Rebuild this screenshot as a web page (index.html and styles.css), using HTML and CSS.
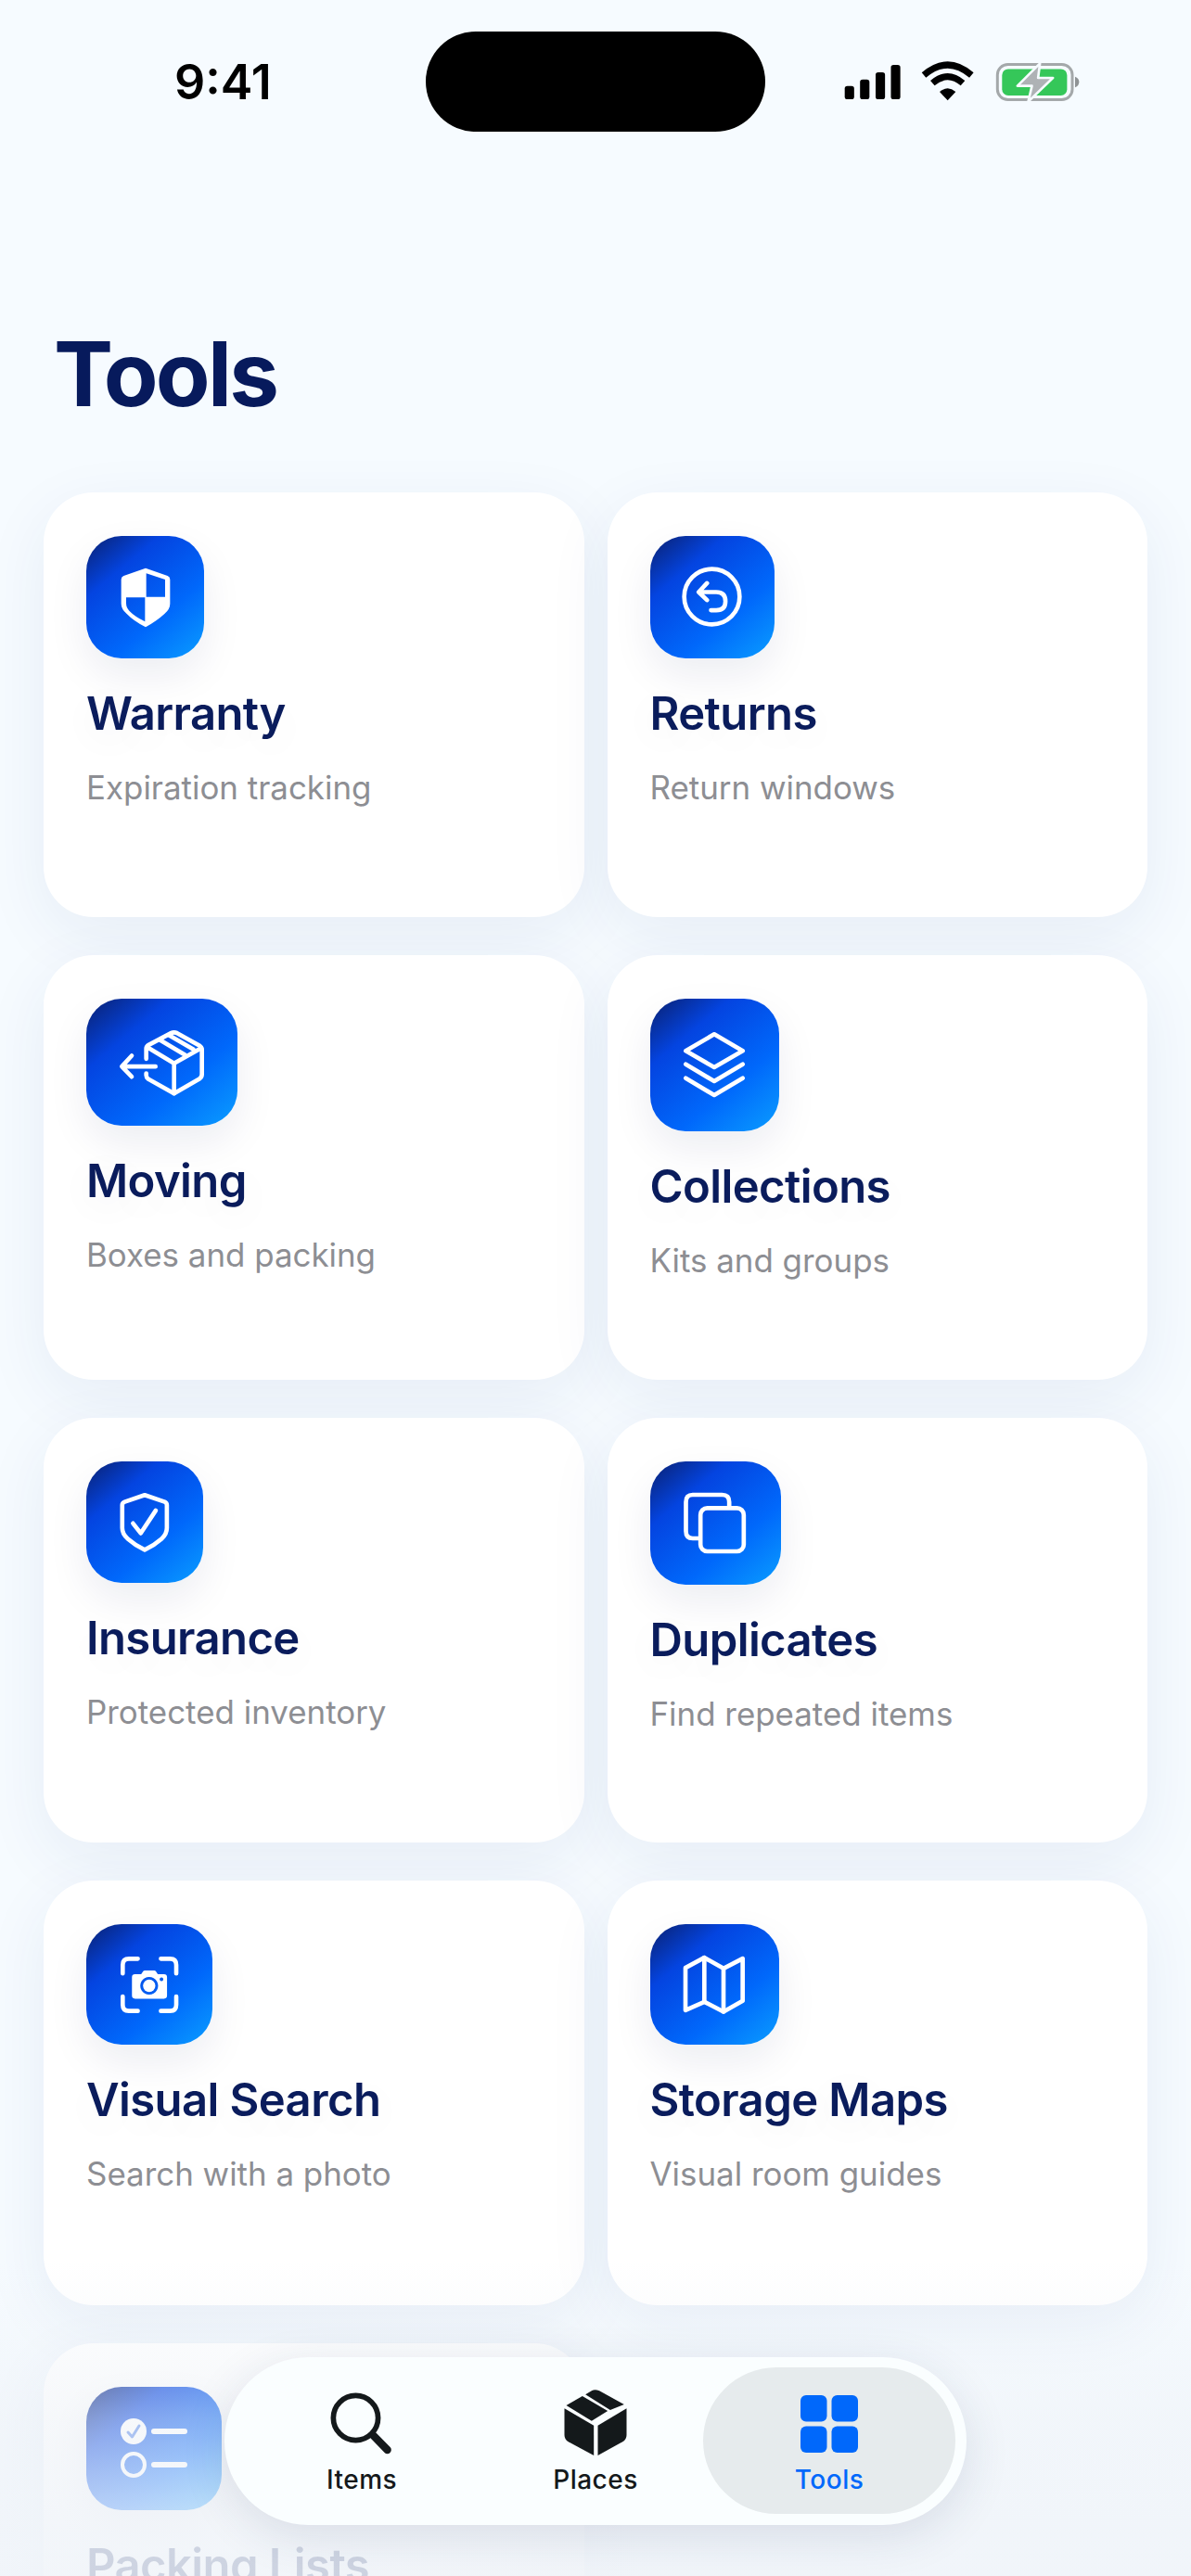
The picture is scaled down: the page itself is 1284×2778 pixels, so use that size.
FILE: index.html
```html
<!DOCTYPE html>
<html lang="en">
<head>
    <meta charset="UTF-8">
    <meta name="viewport" content="width=device-width, initial-scale=1.0">
    <title>Tools</title>
    <link rel="stylesheet" href="styles.css">
</head>
<body>
    <div class="screen">
        <!-- Status bar -->
        <div class="status-bar">
            <div class="time">9:41</div>
            <div class="island"></div>
            <div class="status-icons">
                <svg width="63" height="39" viewBox="90 52 198 123"><rect x="95" y="127" width="32" height="45" rx="9"/><rect x="147" y="105" width="32" height="67" rx="9"/><rect x="200" y="80" width="32" height="92" rx="9"/><rect x="252" y="55" width="32" height="117" rx="9"/></svg>
                <svg width="60" height="45" viewBox="345 45 180 135"><path d="M357 90Q434 24 511 90M385 116Q434 74 483 116" fill="none" stroke="#000" stroke-width="21"/><path d="M408 144Q434 122 460 144L434 172Z"/></svg>
                <svg width="93" height="45" viewBox="580 45 280 135"><rect x="590" y="55" width="243" height="115" rx="34" fill="none" stroke="#a4a8aa" stroke-width="9"/><rect x="605" y="70" width="211" height="86" rx="20" fill="#35c759"/><path d="M842 95Q855 100 855 112Q855 125 842 130Z" fill="#8f9395"/><path d="M728 52L655 125H702L690 176L770 99H722Z" fill="#aeb2b5" stroke="#f6fbff" stroke-width="8" stroke-linejoin="round"/></svg>
            </div>
        </div>

        <h1 class="page-title">Tools</h1>

        <!-- Tool cards -->
        <div class="card-grid">
            <div class="card">
                <div class="card-icon icon-warranty">
                    <svg width="54" height="65" viewBox="268 245 162 195"><path fill="#fff" fill-rule="evenodd" d="M349 247L420 272Q428 275 428 284V362Q428 380 410 395Q385 418 349 438Q310 418 288 395Q270 380 270 362V284Q270 275 278 272ZM351 264V340H412V284ZM286 342V360Q286 375 296 385Q312 402 347 420V342Z"/></svg>
                </div>
                <h3>Warranty</h3>
                <p>Expiration tracking</p>
            </div>
            <div class="card">
                <div class="card-icon icon-returns">
                    <svg width="68" height="68" viewBox="160 150 205 205" class="line"><circle cx="261" cy="251" r="90"/><path d="M245 207L218 236L245 262M222 236H275Q305 236 305 266Q305 295 275 295H258"/></svg>
                </div>
                <h3>Returns</h3>
                <p>Return windows</p>
            </div>
            <div class="card">
                <div class="card-icon icon-moving">
                    <svg width="95" height="72" viewBox="170 150 285 215" class="line"><path d="M262 245V212Q262 205 270 200L342 162Q352 157 362 162L435 203Q442 208 442 215V295Q442 304 435 309L352 357L268 310Q262 305 262 298V292"/><path d="M265 207L352 260L440 210M352 260V357M305 183L388 233M335 168L415 215"/><path d="M215 235L183 270L215 303M190 270H292"/></svg>
                </div>
                <h3>Moving</h3>
                <p>Boxes and packing</p>
            </div>
            <div class="card">
                <div class="card-icon icon-collections">
                    <svg width="70" height="75" viewBox="165 165 210 225" class="line"><path d="M270 178L362 232L270 285L178 232Z"/><path d="M178 275L270 330L362 275M178 320L270 375L362 320"/></svg>
                </div>
                <h3>Collections</h3>
                <p>Kits and groups</p>
            </div>
            <div class="card">
                <div class="card-icon icon-insurance">
                    <svg width="60" height="68" viewBox="170 145 180 205" class="line"><path d="M260 158L325 180Q332 183 332 190V265Q332 285 315 300Q290 322 260 336Q230 322 205 300Q187 285 187 265V190Q187 183 195 180Z"/><path d="M222 250L247 282L296 208"/></svg>
                </div>
                <h3>Insurance</h3>
                <p>Protected inventory</p>
            </div>
            <div class="card">
                <div class="card-icon icon-duplicates">
                    <svg width="72" height="70" viewBox="165 145 215 210" class="line"><path d="M318 195V180Q318 157 295 157H200Q178 157 178 180V275Q178 298 200 298H222"/><rect x="225" y="200" width="140" height="140" rx="22"/></svg>
                </div>
                <h3>Duplicates</h3>
                <p>Find repeated items</p>
            </div>
            <div class="card">
                <div class="card-icon icon-visual">
                    <svg width="68" height="67" viewBox="170 140 205 200"><path class="line-path" d="M186 203V175Q186 155 206 155H235M310 155H340Q360 155 360 175V203M186 278V305Q186 325 206 325H235M310 325H340Q360 325 360 305V278"/><path fill="#fff" fill-rule="evenodd" d="M226 205H246L252 196Q254 193 258 193H288Q292 193 294 196L300 205H320Q330 205 330 215V275Q330 285 320 285H226Q216 285 216 275V215Q216 205 226 205ZM272 214A29 29 0 1 0 272.01 214ZM312 216A6 6 0 1 0 312.01 216Z"/><circle cx="272" cy="243" r="20" fill="#fff"/></svg>
                </div>
                <h3>Visual Search</h3>
                <p>Search with a photo</p>
            </div>
            <div class="card">
                <div class="card-icon icon-maps">
                    <svg width="70" height="67" viewBox="165 140 210 200" class="line"><path d="M177 185L238 152L300 187L362 155V292L300 327L238 295L177 322Z"/><path d="M238 152V295M300 187V327"/></svg>
                </div>
                <h3>Storage Maps</h3>
                <p>Visual room guides</p>
            </div>
            <div class="card">
                <div class="card-icon icon-packing">
                    <svg width="72" height="66" viewBox="0 0 72 66"><circle cx="14" cy="14" r="14" fill="#fff"/><path d="M8 15L12.5 20L20 8" fill="none" stroke="#4c7fe8" stroke-width="3" stroke-linecap="round" stroke-linejoin="round"/><circle cx="14" cy="50" r="12" fill="none" stroke="#fff" stroke-width="4"/><path d="M36 14H69M36 50H69" stroke="#fff" stroke-width="6" stroke-linecap="round"/></svg>
                </div>
                <h3>Packing Lists</h3>
                <p>Trips and checklists</p>
            </div>
        </div>

        <div class="fade"></div>

        <!-- Tab bar -->
        <nav class="tab-bar">
            <div class="tab">
                <svg width="72" height="72" viewBox="345 140 215 215"><circle cx="433" cy="228" r="72" fill="none" stroke="#14191b" stroke-width="17"/><path d="M488 283L535 331" stroke="#14191b" stroke-width="25" stroke-linecap="round"/></svg>
                <span>Items</span>
            </div>
            <div class="tab">
                <svg width="72" height="76" viewBox="1095 130 215 228" fill="#14191b"><path d="M1102 200L1197 255V352L1115 308Q1102 300 1102 285Z"/><path d="M1303 200V285Q1303 300 1290 308L1210 352V255Z"/><path d="M1108 190L1160 160L1242 208L1190 240Z"/><path d="M1170 155L1190 143Q1200 137 1215 143L1295 187L1250 205Z"/></svg>
                <span>Places</span>
            </div>
            <div class="tab active">
                <svg class="tab-grid" width="62" height="62" viewBox="0 0 62 62" fill="#0068fb"><rect width="28.500" height="28.500" rx="6"/><rect x="33.500" width="28.500" height="28.500" rx="6"/><rect y="33.500" width="28.500" height="28.500" rx="6"/><rect x="33.500" y="33.500" width="28.500" height="28.500" rx="6"/></svg>
                <span>Tools</span>
            </div>
        </nav>
    </div>
</body>
</html>
```

FILE: styles.css
```css
/* General Styles */
html, body {
    margin: 0;
    padding: 0;
}

body {
    font-family: Inter, "Liberation Sans", sans-serif;
    background-color: #f6fbff;
    color: #0a1c5c;
}

.screen {
    position: relative;
    width: 1284px;
    height: 2778px;
    overflow: hidden;
    background-color: #f6fbff;
}

/* Status bar */
.status-bar {
    display: flex;
    align-items: center;
    height: 108px;
    padding: 34px 0 0 188px;
}

.time {
    flex-shrink: 0;
    width: 271px;
    font-size: 52px;
    font-weight: 600;
    color: #000;
}

.island {
    flex-shrink: 0;
    width: 366px;
    height: 108px;
    border-radius: 54px;
    background: #000;
}

.status-icons {
    display: flex;
    align-items: center;
    gap: 20px;
    margin-left: 84px;
}

/* Page title */
.page-title {
    margin: 0;
    padding: 217px 0 0 58px;
    height: 89px;
    font-size: 96px;
    line-height: 89px;
    font-weight: 700;
    letter-spacing: -2.800px;
    color: #071a5c;
}

/* Cards */
.card-grid {
    display: grid;
    grid-template-columns: 1fr 1fr;
    grid-auto-rows: 458px;
    gap: 41px 25px;
    padding: 83px 47px 0;
}

.card {
    padding: 47px 46px 0;
    background: #fff;
    border-radius: 54px;
    box-shadow: 0 20px 70px rgba(30, 60, 130, 0.07);
}

.card h3 {
    margin: 36px 0 0;
    font-size: 49px;
    line-height: 48px;
    font-weight: 600;
    letter-spacing: -0.600px;
    color: #0a1c5c;
    text-shadow: 0 10px 40px rgba(10, 30, 90, 0.06);
}

.card p {
    margin: 34px 0 0;
    font-size: 34.900px;
    line-height: 42px;
    font-weight: 400;
    color: #8d8e93;
}

.card-icon {
    display: flex;
    align-items: center;
    justify-content: center;
    border-radius: 38px;
    background: linear-gradient(140deg, #0a206f 0%, #0444e0 28%, #0068fb 65%, #0a9dff 100%);
    box-shadow: 0 18px 44px rgba(10, 30, 90, 0.08);
}

.icon-warranty { width: 127px; height: 132px; }
.icon-returns { width: 134px; height: 132px; }
.icon-moving { width: 163px; height: 137px; }
.icon-collections { width: 139px; height: 143px; }
.icon-insurance { width: 126px; height: 131px; }
.icon-duplicates { width: 141px; height: 133px; }
.icon-visual { width: 136px; height: 130px; }
.icon-maps { width: 139px; height: 130px; }
.icon-packing { width: 146px; height: 133px; }

.line {
    fill: none;
    stroke: #fff;
    stroke-width: 14;
    stroke-linecap: round;
    stroke-linejoin: round;
}

.line-path {
    fill: none;
    stroke: #fff;
    stroke-width: 14;
    stroke-linecap: round;
}

/* Bottom fade over the list */
.fade {
    position: absolute;
    left: 0;
    right: 0;
    bottom: 0;
    height: 340px;
    background: linear-gradient(to bottom, rgba(238, 242, 247, 0) 0%, rgba(238, 242, 247, 0.55) 50%, rgba(240, 244, 249, 0.85) 90%);
}

/* Tab bar */
.tab-bar {
    position: absolute;
    left: 242px;
    top: 2542px;
    display: grid;
    grid-template-columns: 272px 232px 272px;
    width: 776px;
    height: 158px;
    padding: 11px 12px 12px;
    background: #fafeff;
    border-radius: 91px;
    box-shadow: 0 12px 50px rgba(30, 50, 90, 0.12);
}

.tab {
    display: flex;
    flex-direction: column;
    align-items: center;
    justify-content: flex-end;
    gap: 7px;
    padding-bottom: 20px;
    border-radius: 79px;
    font-size: 28px;
    line-height: 34px;
    font-weight: 500;
    letter-spacing: 0.500px;
    color: #14191b;
}

.tab.active {
    background: #e6ebed;
    color: #0068fb;
}

.tab-grid {
    margin-bottom: 5px;
}
```
